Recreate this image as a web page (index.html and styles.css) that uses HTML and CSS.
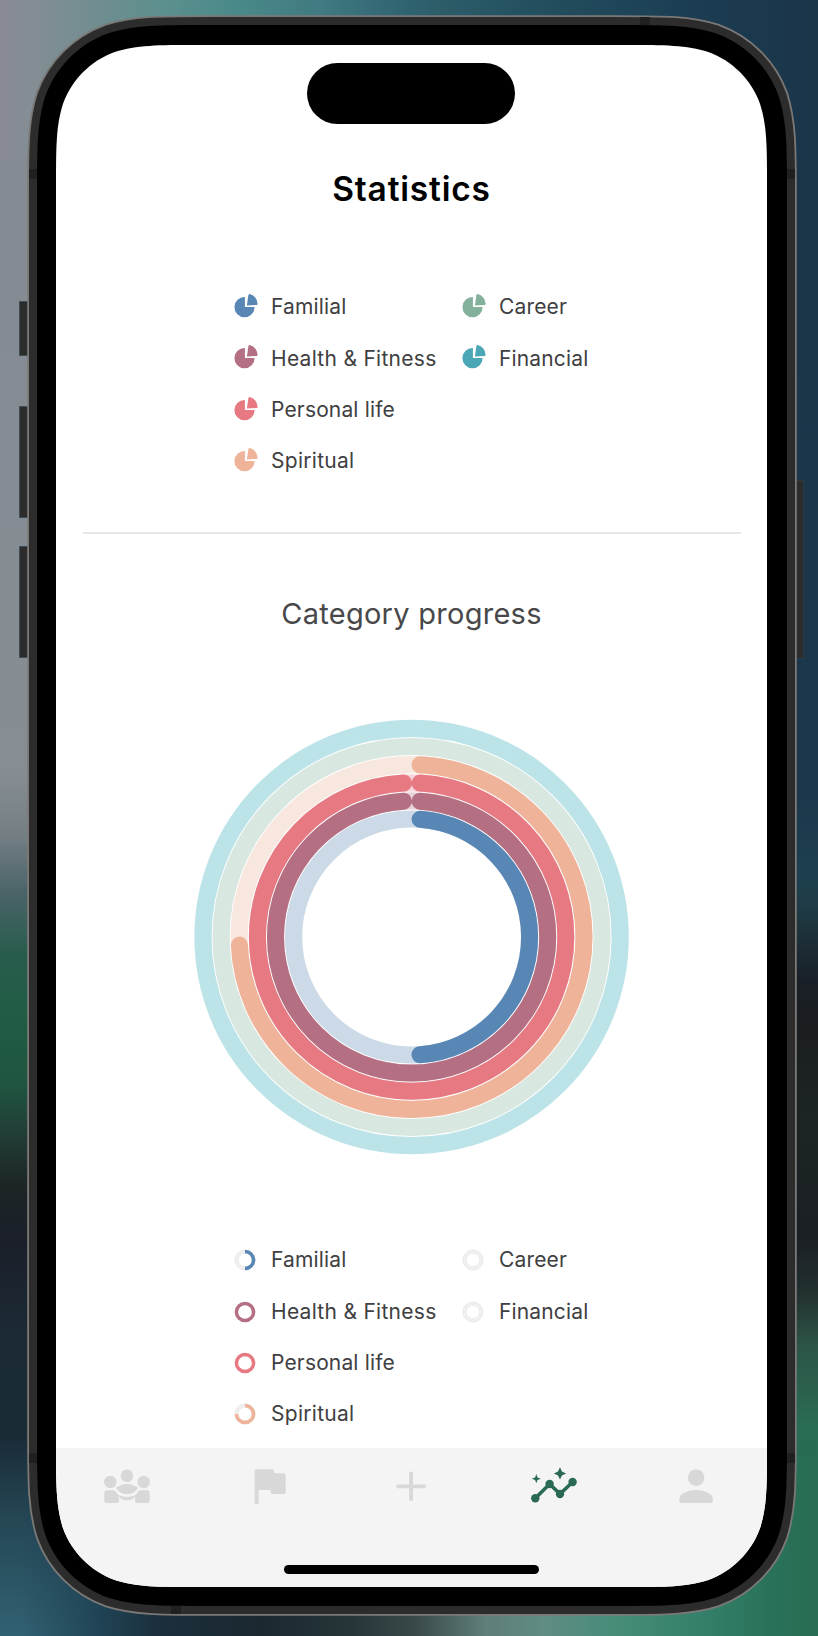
FILE: index.html
```html
<!DOCTYPE html>
<html lang="en">
<head>
<meta charset="utf-8">
<title>Statistics</title>
<link rel="stylesheet" href="styles.css">
</head>
<body>
<svg class="defs" width="0" height="0" aria-hidden="true">
  <symbol id="pie" viewBox="0 0 24 24">
    <path d="M10.9 3.1V13H20.6A10.1 10.1 0 1 1 10.9 3.1Z"/>
    <path d="M12.9 11.4 14.4 0.9Q14.7 0 15.6 0A10.4 10.4 0 0 1 23.6 9.8Q23.7 10.8 22.6 11Z"/>
  </symbol>
  <path id="case" d="M171.2 0H578.8C628.1 0 652.7 0 679.3 8.4C708.2 18.9 731.1 41.8 741.6 70.7C750 97.3 750 121.9 750 171.2V1409.8C750 1459.1 750 1483.7 741.6 1510.3C731.1 1539.2 708.2 1562.1 679.3 1572.6C652.7 1581 628.1 1581 578.8 1581H171.2C121.9 1581 97.3 1581 70.7 1572.6C41.8 1562.1 18.9 1539.2 8.4 1510.3C0 1483.7 0 1459.1 0 1409.8V171.2C0 121.9 0 97.3 8.4 70.7C18.9 41.8 41.8 18.9 70.7 8.4C97.3 0 121.9 0 171.2 0Z"/>
</svg>
<div class="device">
  <svg class="shell" width="818" height="1636" viewBox="0 0 818 1636" aria-hidden="true">
    <g class="buttons">
      <rect x="19.5" y="301.5" width="9" height="54"/>
      <rect x="19.5" y="406.5" width="9" height="111"/>
      <rect x="19.5" y="546.5" width="9" height="111"/>
      <rect x="796" y="480.5" width="7.5" height="178"/>
    </g>
    <g transform="translate(37 25)">
      <use href="#case" class="edge"/>
      <use href="#case" class="frame"/>
    </g>
    <g class="bands">
      <rect x="29" y="169" width="8" height="10"/><rect x="787" y="169" width="8" height="10"/>
      <rect x="29" y="1453" width="8" height="10"/><rect x="787" y="1453" width="8" height="10"/>
      <rect x="640" y="17" width="10" height="8"/><rect x="171" y="1606" width="10" height="8"/>
    </g>
    <g transform="translate(37 25)"><use href="#case" class="bezel"/></g>
  </svg>

  <main class="screen">
    <div class="island"></div>
    <h1 class="title">Statistics</h1>

    <div class="legend">
      <div class="item blue"><svg class="pie"><use href="#pie"/></svg><span>Familial</span></div>
      <div class="item green"><svg class="pie"><use href="#pie"/></svg><span>Career</span></div>
      <div class="item plum"><svg class="pie"><use href="#pie"/></svg><span class="wide">Health &amp; Fitness</span></div>
      <div class="item teal"><svg class="pie"><use href="#pie"/></svg><span>Financial</span></div>
      <div class="item rose first"><svg class="pie"><use href="#pie"/></svg><span>Personal life</span></div>
      <div class="item peach first"><svg class="pie"><use href="#pie"/></svg><span class="wide">Spiritual</span></div>
    </div>

    <hr class="divider">
    <h2 class="subtitle">Category progress</h2>

    <svg class="chart" width="436" height="436" viewBox="-217.6 -218 436 436">
      <g class="tracks">
        <circle r="208.6" stroke="#bce4e8"/>
        <circle r="190.5" stroke="#d8e7df"/>
        <circle r="172.4" stroke="#f8e7df"/>
        <circle r="154.2" stroke="#f7d6db"/>
        <circle r="136.1" stroke="#e8d3da"/>
        <circle r="118" stroke="#ccdae8"/>
      </g>
      <g class="bars" transform="rotate(-90)">
        <circle r="172.4" stroke="#eeb398" stroke-dasharray="795.4 2000"/>
        <circle r="154.2" stroke="#e67982" stroke-dasharray="951.9 2000"/>
        <circle r="136.1" stroke="#b46f82" stroke-dasharray="838.1 2000"/>
        <circle r="118" stroke="#5886b5" stroke-dasharray="353.7 2000"/>
      </g>
    </svg>

    <div class="legend progress">
      <div class="item blue"><svg class="donut" viewBox="-12 -12 24 24"><circle class="rim" r="8.6"/><circle class="hair" r="10"/><circle class="hair" r="6.8"/><path d="M0-8.6A8.6 8.6 0 0 1 0 8.6"/></svg><span>Familial</span></div>
      <div class="item empty"><svg class="donut" viewBox="-12 -12 24 24"><circle class="rim" r="8.6"/><circle class="hair" r="10"/><circle class="hair" r="6.8"/></svg><span>Career</span></div>
      <div class="item plum"><svg class="donut" viewBox="-12 -12 24 24"><circle r="8.6"/></svg><span class="wide">Health &amp; Fitness</span></div>
      <div class="item empty"><svg class="donut" viewBox="-12 -12 24 24"><circle class="rim" r="8.6"/><circle class="hair" r="10"/><circle class="hair" r="6.8"/></svg><span>Financial</span></div>
      <div class="item rose first"><svg class="donut" viewBox="-12 -12 24 24"><circle r="8.6"/></svg><span>Personal life</span></div>
      <div class="item peach first"><svg class="donut" viewBox="-12 -12 24 24"><circle class="rim" r="8.6"/><circle class="hair" r="10"/><circle class="hair" r="6.8"/><path d="M0-8.6A8.6 8.6 0 1 1-8.6 0"/></svg><span class="wide">Spiritual</span></div>
    </div>

    <nav class="tabs">
      <div class="tab-row">
        <svg class="tab" viewBox="0 0 50 50">
          <circle cx="8.3" cy="22" r="6.2"/><circle cx="25" cy="15.7" r="6.3"/><circle cx="41.7" cy="22" r="6.2"/>
          <path d="M13.8 27.8Q25 20.2 36.2 27.8Q32 34.2 25 34.2Q18 34.2 13.8 27.8Z"/>
          <path id="side" d="M5 30.2H11.5Q13.2 30.2 14.2 32Q15.4 34.2 17.1 35.3V40.3Q17.1 43 14.4 43H5Q2.3 43 2.3 40.3V32.9Q2.3 30.2 5 30.2Z"/>
          <use href="#side" transform="matrix(-1 0 0 1 50 0)"/>
          <path d="M17 35.2Q25 38.6 33 35.2L31.8 38.2Q25 42.6 18.2 38.2Z"/>
        </svg>
        <svg class="tab" viewBox="0 0 50 50"><path d="M12.2 9.3H28Q29.4 9.3 29.7 10.7L30.2 13.3H40Q41.7 13.3 41.7 15V32.3Q41.7 34 40 34H28.5Q27 34 26.8 32.5L26.3 30H14.7V42.3Q14.7 44.3 12.7 44.3Q10.7 44.3 10.7 42.3V10.8Q10.7 9.3 12.2 9.3Z"/></svg>
        <svg class="tab" viewBox="0 0 50 50"><path d="M23.2 11.7H27V24.4H39.7V28.2H27V40.8H23.2V28.2H10.5V24.4H23.2Z"/></svg>
        <svg class="tab active" viewBox="0 0 50 50">
          <path class="line" d="M6.3 38.3 20.6 24 31 34 43.6 22"/>
          <circle cx="6.3" cy="38.3" r="4.2"/><circle cx="20.6" cy="24" r="4.2"/><circle cx="31" cy="34" r="4.2"/><circle cx="43.6" cy="22" r="4.2"/>
          <path d="M31 7.3 32.9 11.5 37.1 13.4 32.9 15.4 31 19.5 29 15.4 24.9 13.4 29 11.5Z"/>
          <path d="M7.3 14.1 8.5 17.5 11.9 18.7 8.5 19.9 7.3 23.3 6.1 19.9 2.7 18.7 6.1 17.5Z"/>
        </svg>
        <svg class="tab" viewBox="0 0 50 50"><circle cx="25.1" cy="17.7" r="8.3"/><path d="M8.4 38.5Q8.4 35.5 11 34Q17.5 30.1 25.1 30.1Q32.7 30.1 39.2 34Q41.8 35.5 41.8 38.5V41Q41.8 43 39.8 43H10.4Q8.4 43 8.4 41Z"/></svg>
      </div>
      <div class="home"></div>
    </nav>
  </main>
</div>
</body>
</html>
```

FILE: styles.css
```css
* { box-sizing: border-box; }

html { background: #1c374b; }

body {
  margin: 0;
  width: 818px;
  height: 1636px;
  overflow: hidden;
  font-family: Inter, "Liberation Sans", sans-serif;
  background:
    linear-gradient(90deg, #8a8a94 0, #848e94 30px, #6f8d90 100px, #5c908e 165px, #4a8989 235px, #417a82 320px, #306572 400px, #2c5d69 440px, #23505f 530px, #1f4558 620px, #1b3b50 710px, #1b3549 818px) 0 0 / 818px 160px no-repeat,
    linear-gradient(90deg, rgba(31, 66, 83, 0) 20px, #1f4253 105px, #1b2e3c 160px, #1b2830 260px, #263638 350px, #39494a 415px, #5f7e78 485px, #5f8c83 545px, #448c78 625px, #34806a 700px, #29725a 770px, #286c52 818px) 0 100% / 818px 180px no-repeat,
    linear-gradient(180deg, #848b93 160px, #868e94 770px, #747f84 835px, #4b6468 892px, #285c4d 955px, #205c44 1020px, #1f5540 1085px, #223c37 1135px, #1d2526 1186px, #1a1f29 1243px, #1c2b36 1339px, #1a2c37 1440px, #254655 1517px, #316272 1636px) 0 0 / 409px 1636px no-repeat,
    linear-gradient(180deg, #1b3549 160px, #1c374b 790px, #1d3f50 873px, #1f3c46 904px, #1a1f27 983px, #1b1e20 1030px, #1d2524 1125px, #1a1f24 1235px, #222f2f 1290px, #2d5446 1345px, #296b53 1424px, #286f55 1636px) 409px 0 / 409px 1636px no-repeat;
}

.defs { position: absolute; }

.device {
  position: relative;
  width: 818px;
  height: 1636px;
  padding: 45px 51px 49px 56px;
}

.shell { position: absolute; left: 0; top: 0; }
.buttons { fill: #2c2c2c; stroke: rgba(45, 65, 75, .55); }
.edge { fill: none; stroke: #7b7977; stroke-width: 19.6; }
.frame { fill: none; stroke: #2c2c2c; stroke-width: 16; }
.bands { fill: #202020; }
.bezel { fill: #000; }

.screen {
  position: relative;
  display: flex;
  flex-direction: column;
  align-items: center;
  width: 711px;
  height: 1542px;
  background: #fff;
  clip-path: path("M142.2 0H568.8C609.8 0 630.2 0 652.3 7C676.3 15.7 695.3 34.7 704 58.7C711 80.8 711 101.2 711 142.2V1399.8C711 1440.8 711 1461.2 704 1483.3C695.3 1507.3 676.3 1526.3 652.3 1535C630.2 1542 609.8 1542 568.8 1542H142.2C101.2 1542 80.8 1542 58.7 1535C34.7 1526.3 15.7 1507.3 7 1483.3C0 1461.2 0 1440.8 0 1399.8V142.2C0 101.2 0 80.8 7 58.7C15.7 34.7 34.7 15.7 58.7 7C80.8 0 101.2 0 142.2 0Z");
}

.island {
  flex: none;
  width: 208px;
  height: 61px;
  margin: 18.4px 1px 0 0;
  border-radius: 31px;
  background: #000;
}

.title {
  margin: 44.6px 0 0;
  font-size: 33.5px;
  line-height: 40px;
  font-weight: 600;
  letter-spacing: .8px;
  color: #000;
}

.legend {
  display: grid;
  grid-template-columns: 228px 150px;
  grid-auto-rows: 51.3px;
  width: 378px;
  margin: 73px 0 0 23px;
}

.item {
  display: flex;
  align-items: center;
  gap: 13px;
  font-size: 21px;
  letter-spacing: .15px;
  color: #404042;
  white-space: nowrap;
}

.item span { margin-top: -1.5px; }
.wide { letter-spacing: .28px; }

.first { grid-column: 1; }

.pie, .donut { flex: none; width: 24px; height: 24px; overflow: visible; }
.pie { fill: var(--tone); margin-top: -3px; }
.donut { fill: none; stroke: var(--tone); stroke-width: 3.5; margin-left: -1.3px; margin-right: 1.3px; }
.donut .rim { stroke: #f1f1f1; }
.donut .hair { stroke: #e4e4e4; stroke-width: .7; }

.blue { --tone: #5886b5; }
.green { --tone: #83b19c; }
.plum { --tone: #b46f82; }
.teal { --tone: #4ba6b5; }
.rose { --tone: #e67982; }
.peach { --tone: #eeb398; }

.divider {
  flex: none;
  width: 658px;
  height: 2px;
  margin: 45px 0 0;
  border: 0;
  background: #e6e6e6;
}

.subtitle {
  margin: 62px 0 0;
  font-size: 29px;
  line-height: 36px;
  font-weight: 400;
  letter-spacing: .27px;
  color: #48484a;
}

.chart { flex: none; display: block; margin-top: 87px; }
.tracks { fill: none; stroke-width: 17.2; }
.bars { fill: none; stroke-width: 17; stroke-linecap: round; stroke-dashoffset: -8.5; }

.progress { margin-top: 79.5px; }
.progress .item span { margin-top: -1px; }

.tabs {
  display: flex;
  flex-direction: column;
  align-items: center;
  width: 711px;
  height: 139px;
  margin-top: auto;
  padding-top: 12px;
  background: #f4f4f4;
}

.tab-row { display: grid; grid-template-columns: repeat(5, 1fr); justify-items: center; width: 711px; }
.tab { width: 50px; height: 50px; fill: #d8d8d8; }
.active { fill: #2a6a54; }
.line { fill: none; stroke: #2a6a54; stroke-width: 3.6; }

.home {
  width: 255px;
  height: 9px;
  margin-top: 55px;
  border-radius: 5px;
  background: #000;
}
```
